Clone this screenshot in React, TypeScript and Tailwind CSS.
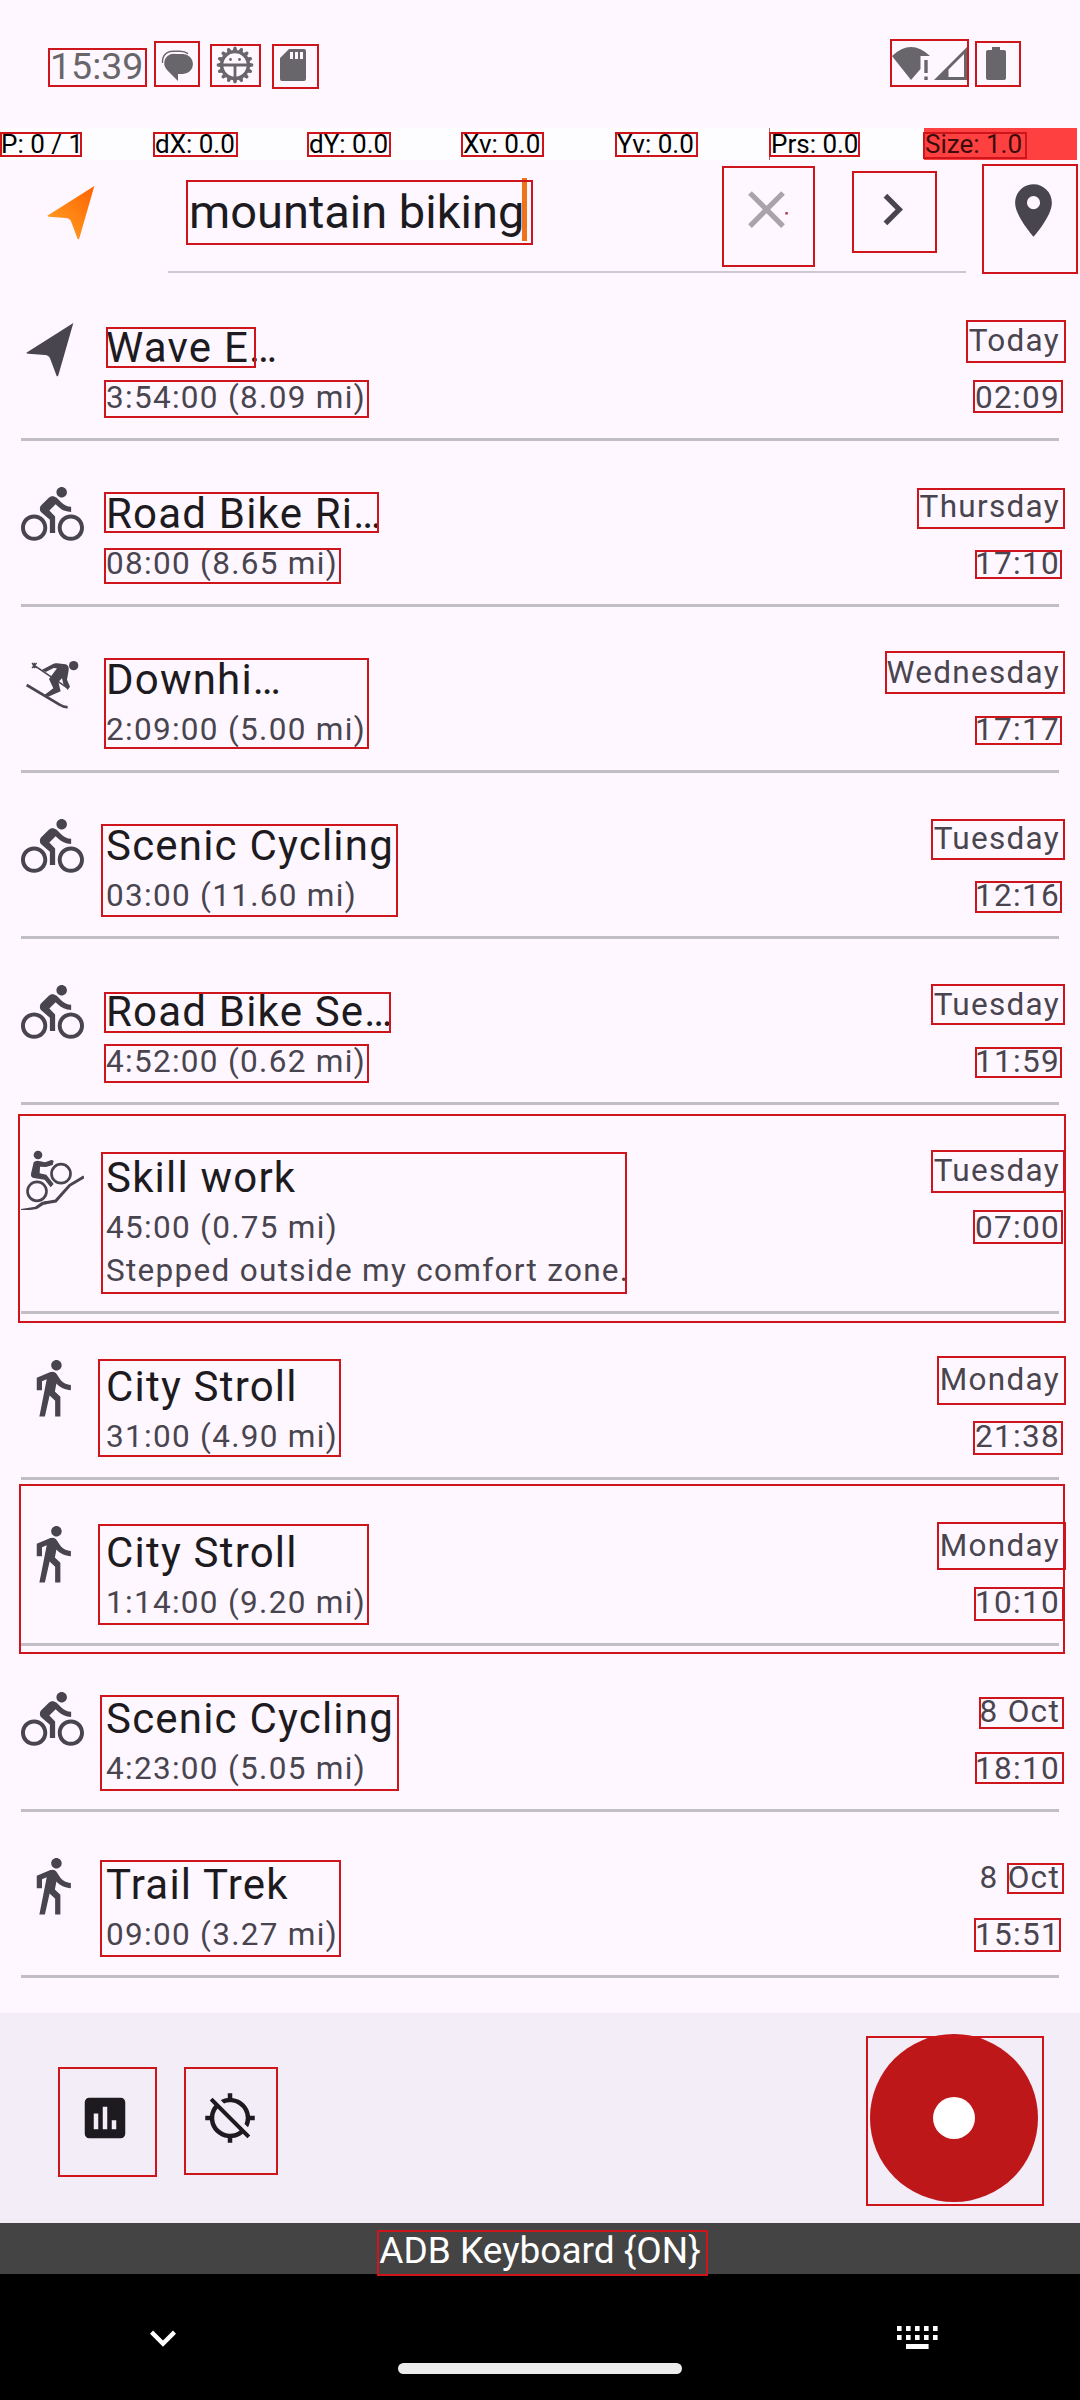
import type { ReactNode } from "react";
import { MdAssessment, MdDirectionsBike, MdDirectionsWalk, MdLocationDisabled, MdPlace } from "react-icons/md";

type Sport = "nav" | "bike" | "ski" | "mtb" | "walk";

interface Activity {
  sport: Sport;
  title: string;
  stats: string;
  note?: string;
  day: string;
  time: string;
}

const activities: Activity[] = [
  { sport: "nav", title: "Wave E…", stats: "3:54:00 (8.09 mi)", day: "Today", time: "02:09" },
  { sport: "bike", title: "Road Bike Ri…", stats: "08:00 (8.65 mi)", day: "Thursday", time: "17:10" },
  { sport: "ski", title: "Downhi…", stats: "2:09:00 (5.00 mi)", day: "Wednesday", time: "17:17" },
  { sport: "bike", title: "Scenic Cycling", stats: "03:00 (11.60 mi)", day: "Tuesday", time: "12:16" },
  { sport: "bike", title: "Road Bike Se…", stats: "4:52:00 (0.62 mi)", day: "Tuesday", time: "11:59" },
  { sport: "mtb", title: "Skill work", stats: "45:00 (0.75 mi)", note: "Stepped outside my comfort zone.", day: "Tuesday", time: "07:00" },
  { sport: "walk", title: "City Stroll", stats: "31:00 (4.90 mi)", day: "Monday", time: "21:38" },
  { sport: "walk", title: "City Stroll", stats: "1:14:00 (9.20 mi)", day: "Monday", time: "10:10" },
  { sport: "bike", title: "Scenic Cycling", stats: "4:23:00 (5.05 mi)", day: "8 Oct", time: "18:10" },
  { sport: "walk", title: "Trail Trek", stats: "09:00 (3.27 mi)", day: "8 Oct", time: "15:51" },
];

/** Element bounds: left, top, right, bottom. */
const bounds: [number, number, number, number][] = [
  [48, 48, 147, 87], [154, 41, 200, 87], [210, 44, 261, 87], [272, 44, 319, 89],
  [890, 39, 969, 87], [975, 41, 1021, 87],
  [0, 132, 82, 157], [153, 132, 238, 157], [307, 132, 391, 157], [461, 132, 544, 157],
  [615, 132, 698, 157], [769, 132, 860, 157], [923, 132, 1027, 159],
  [186, 180, 533, 245], [722, 166, 815, 267], [852, 171, 937, 253], [982, 164, 1078, 274],
  [106, 327, 256, 368], [104, 380, 369, 418], [966, 320, 1066, 363], [973, 380, 1063, 413],
  [104, 492, 379, 533], [104, 548, 341, 584], [917, 488, 1065, 529], [975, 550, 1062, 579],
  [104, 658, 369, 749], [885, 651, 1065, 694], [975, 716, 1062, 745],
  [101, 824, 398, 917], [931, 819, 1065, 860], [975, 881, 1062, 913],
  [104, 992, 391, 1033], [104, 1044, 369, 1083], [931, 984, 1065, 1025], [975, 1047, 1062, 1078],
  [18, 1114, 1066, 1323], [101, 1152, 627, 1294], [931, 1150, 1065, 1193], [973, 1210, 1063, 1244],
  [98, 1359, 341, 1457], [937, 1356, 1066, 1405], [973, 1421, 1063, 1455],
  [19, 1484, 1065, 1654], [98, 1524, 369, 1625], [937, 1522, 1066, 1570], [974, 1587, 1064, 1621],
  [100, 1695, 399, 1791], [979, 1697, 1064, 1729], [975, 1752, 1064, 1784],
  [100, 1860, 341, 1957], [1007, 1863, 1064, 1894], [974, 1918, 1061, 1952],
  [58, 2067, 157, 2177], [184, 2067, 278, 2175], [866, 2036, 1044, 2206], [377, 2230, 708, 2276],
];

function NavArrow({ gradient = false }: { gradient?: boolean }) {
  return (
    <svg viewBox="0 0 189 189" className="size-[63px] shrink-0">
      <defs>
        <linearGradient id="sunset" x1="1" y1="0" x2="0.2" y2="0.9">
          <stop offset="0" stopColor="#ff6200" />
          <stop offset="1" stopColor="#ff9c22" />
        </linearGradient>
      </defs>
      <path d="M157 18 L16 107 Q17 110 22 110 L72 114 Q83 115 87 124 L107 177 Q110 180 112 175 Z" fill={gradient ? "url(#sunset)" : "currentColor"} />
    </svg>
  );
}

function SkiIcon() {
  return (
    <svg viewBox="0 0 189 189" className="size-[63px] shrink-0" fill="currentColor">
      <circle cx="158" cy="50" r="14" />
      <path d="M62 63 L96 45 Q101 42 108 43 L134 46 Q145 50 143 64 L138 92 L147 113 L140 123 L127 105 L123 88 L112 99 L119 127 L80 144 L70 138 L97 118 L84 90 L108 58 L98 57 L74 69 Z" />
      <g stroke="currentColor" fill="none">
        <path d="M35 46 L138 116" strokeWidth="5" />
        <path d="M33 42 L47 57 M47 42 L33 57 M40 41 V58" strokeWidth="4" />
        <path d="M17 108 L118 168 Q128 175 140 174" strokeWidth="8" />
      </g>
    </svg>
  );
}

function MountainBikeIcon() {
  return (
    <svg viewBox="0 0 189 189" className="size-[63px] shrink-0" fill="currentColor">
      <circle cx="51" cy="24" r="13" />
      <path d="M38 46 Q45 38 58 43 L72 46 L85 41 Q92 37 98 42 L95 54 L75 60 L57 59 L56 79 L76 83 L98 111 L89 121 L71 98 L38 93 Q29 91 30 80 Z" />
      <g stroke="currentColor" fill="none" strokeWidth="8">
        <circle cx="120" cy="80" r="28.5" />
        <circle cx="48" cy="133" r="28.5" />
        <path d="M70 168 L104 162 L146 115 L189 89" strokeWidth="9" />
      </g>
      <path d="M0 189 L0 186 L42 179 L62 165 L76 162 L76 172 L68 173 L48 186 L28 189 Z" />
    </svg>
  );
}

function SportIcon({ sport }: { sport: Sport }) {
  switch (sport) {
    case "nav":
      return <NavArrow />;
    case "ski":
      return <SkiIcon />;
    case "mtb":
      return <MountainBikeIcon />;
    case "walk":
      return <MdDirectionsWalk className="size-[63px] shrink-0" />;
    default:
      return <MdDirectionsBike className="size-[63px] shrink-0" />;
  }
}

const teeth = Array.from({ length: 16 }, (_, i) => i * 22.5);

function StatusBar() {
  return (
    <header className="flex h-32 items-start pt-11 text-[#69666b]">
      <span className="ml-[50px] h-11 w-[99px] text-[37.5px] leading-[44px]">15:39</span>
      <svg viewBox="0 0 32 32" className="ml-[12px] mt-[6px] size-8" fill="currentColor">
        <path d="M15 4 H22 A9.5 9.5 0 0 1 22 24 H17 V31 L6 20 A9.5 9.5 0 0 1 15 4 Z" />
        <path d="M1.5 13 C1 6 5 1.2 12 1.2 H19 Q24 1.2 27 3.6" fill="none" stroke="currentColor" strokeWidth="1.4" />
      </svg>
      <svg viewBox="0 0 38 38" className="ml-[23px] mt-[2px] size-[38px]" fill="currentColor">
        {teeth.map((a) => (
          <path key={a} d="M16.7 4.5 L17.8 0.8 H20.2 L21.3 4.5 Z" transform={`rotate(${a} 19 19)`} />
        ))}
        <circle cx="19" cy="19" r="13.4" fill="none" stroke="currentColor" strokeWidth="3.4" />
        <path d="M6 19 H32 M19 19 V32" stroke="currentColor" strokeWidth="2.8" />
        <circle cx="14.5" cy="13.5" r="1.4" />
        <circle cx="23.5" cy="13.5" r="1.4" />
      </svg>
      <svg viewBox="0 0 26 32" className="ml-[26px] mt-[5px] h-8 w-[26px]" fill="currentColor">
        <path fillRule="evenodd" d="M9 0 H24 Q26 0 26 2 V30 Q26 32 24 32 H2 Q0 32 0 30 V9 Z M10 3 V10 H13 V3 Z M15 3 V10 H18 V3 Z M20 3 V10 H23 V3 Z" />
      </svg>
      <div className="ml-auto mr-[74px] mt-[3px] flex">
        <svg viewBox="0 0 39 33" className="h-[33px] w-[39px]" fill="currentColor">
          <path d="M0 9 Q19 -9 38 9 H28.5 V22 L19 33 Z" />
          <path d="M32.3 13 H35.7 V26 H32.3 Z M32.3 29.5 H35.7 V33 H32.3 Z" />
        </svg>
        <svg viewBox="0 0 33 33" className="ml-[3px] h-[33px] w-[33px]" fill="currentColor">
          <path fillRule="evenodd" d="M33 0 V33 H0 Z M30 7 L14.5 22.5 V30 H30 Z" />
        </svg>
        <svg viewBox="0 0 20 33" className="ml-[19px] h-[33px] w-5" fill="currentColor">
          <path d="M6 0 H14 V3 H18 Q20 3 20 5 V31 Q20 33 18 33 H2 Q0 33 0 31 V5 Q0 3 2 3 H6 Z" />
        </svg>
      </div>
    </header>
  );
}

function PointerStrip() {
  return (
    <div className="grid h-8 grid-cols-[repeat(7,154px)] bg-[#fdfcfe] text-[26px] leading-[32px] text-black">
      <span className="pl-[1px]">P: 0 / 1</span>
      <span className="pl-[1px]">dX: 0.0</span>
      <span className="pl-[1px]">dY: 0.0</span>
      <span className="pl-[1px]">Xv: 0.0</span>
      <span className="pl-[1px]">Yv: 0.0</span>
      <span className="-ml-px border-l border-[#b0606a] pl-[1px]">Prs: 0.0</span>
      <span className="mr-px bg-[#ff4040] pl-[1px] text-[#3a0d0d]">Size: 1.0</span>
    </div>
  );
}

function SearchBar() {
  return (
    <div className="flex h-[115px] items-start text-[#49454f]">
      <div className="ml-[42px] mt-5">
        <NavArrow gradient />
      </div>
      <div className="ml-[63px] flex h-[113px] w-[798px] items-start border-b-2 border-[#cdc7d2]">
        <div className="ml-[21px] mt-[18px] flex h-[63px] w-[546px] items-start">
          <span className="mt-[6px] whitespace-nowrap text-[47px] leading-[56px] text-[#1c1b1f]">mountain biking</span>
          <span className="-ml-[2px] h-[63px] w-[5px] shrink-0 bg-[#f07319]" />
        </div>
        <svg viewBox="0 0 24 24" className="mt-[18px] size-[63px]" fill="#a9a4ac">
          <path d="M19 6.41 17.59 5 12 10.59 6.41 5 5 6.41 10.59 12 5 17.59 6.41 19 12 13.41 17.59 19 19 17.59 13.41 12Z" />
          <rect x="19.2" y="13" width="0.9" height="0.9" fill="#a8283a" />
        </svg>
        <svg viewBox="0 0 24 24" className="ml-[63px] mt-[18px] size-[63px]" fill="currentColor">
          <path d="M8.59 16.59 13.17 12 8.59 7.41 10 6l6 6-6 6Z" />
        </svg>
      </div>
      <MdPlace className="ml-9 mt-[19px] size-[63px]" />
    </div>
  );
}

function ActivityRow({ item }: { item: Activity }) {
  return (
    <li className="mx-[21px] flex border-b-[3px] border-[#c2bfc4] text-[31.5px] leading-[43px] tracking-[1.3px] text-[#49454f]">
      <div className="mt-[42px]">
        <SportIcon sport={item.sport} />
      </div>
      <div className="ml-[22px] mt-12 flex flex-1 flex-col pb-[19px]">
        <h2 className="mb-[3px] text-[42px] leading-[50px] tracking-[1.2px] text-[#1d1b20]">{item.title}</h2>
        <p>{item.stats}</p>
        {item.note && <p>{item.note}</p>}
      </div>
      <div className="-mr-[1px] mt-11 flex flex-col items-end gap-[14px]">
        <span>{item.day}</span>
        <span>{item.time}</span>
      </div>
    </li>
  );
}

function BottomBar() {
  return (
    <div className="mt-[35px] flex h-[210px] items-center bg-[#f3edf7] text-[#1d1b20]">
      <MdAssessment className="mb-px ml-[77.5px] size-[54px]" />
      <MdLocationDisabled className="mb-px ml-[71px] size-[54px]" />
      <div className="ml-auto mr-[42px] flex size-[168px] items-center justify-center rounded-full bg-[#be171a]">
        <div className="mb-px mr-px size-[42px] rounded-full bg-white" />
      </div>
    </div>
  );
}

const keyColumns = [0, 9, 18, 27, 36];

function KeyboardArea() {
  return (
    <footer className="bg-black">
      <div className="h-[51px] bg-[#444444] text-center text-[37px] leading-[56px] text-white">ADB Keyboard {"{ON}"}</div>
      <div className="flex h-[126px] items-start">
        <svg viewBox="0 0 24 24" className="ml-[137px] mt-[38px] size-[52px]" fill="white">
          <path d="M16.59 8.59 12 13.17 7.41 8.59 6 10l6 6 6-6Z" />
        </svg>
        <div className="ml-[209px] mt-[89px] h-[11px] w-[284px] rounded-full bg-[#ececec]" />
        <svg viewBox="0 0 41 23" className="ml-[215px] mt-[52px] h-[23px] w-[41px]" fill="white">
          {keyColumns.map((x) => (
            <path key={x} d={`M${x} 0h4.6v5h-4.6z M${x} 9h4.6v5h-4.6z`} />
          ))}
          <rect x="9" y="18" width="22.6" height="5" />
        </svg>
      </div>
    </footer>
  );
}

function Bounds(): ReactNode {
  return bounds.map(([l, t, r, b]) => (
    <div
      key={`${l}-${t}`}
      className="pointer-events-none absolute border-2 border-[#ce151b]"
      style={{ left: l, top: t, width: r - l, height: b - t }}
    />
  ));
}

export default function App() {
  return (
    <div className="relative h-[2400px] w-[1080px] overflow-hidden bg-[#fef7ff] font-['Roboto',sans-serif]">
      <StatusBar />
      <PointerStrip />
      <SearchBar />
      <ul>
        {activities.map((item) => (
          <ActivityRow key={item.day + item.time} item={item} />
        ))}
      </ul>
      <BottomBar />
      <KeyboardArea />
      <Bounds />
    </div>
  );
}
